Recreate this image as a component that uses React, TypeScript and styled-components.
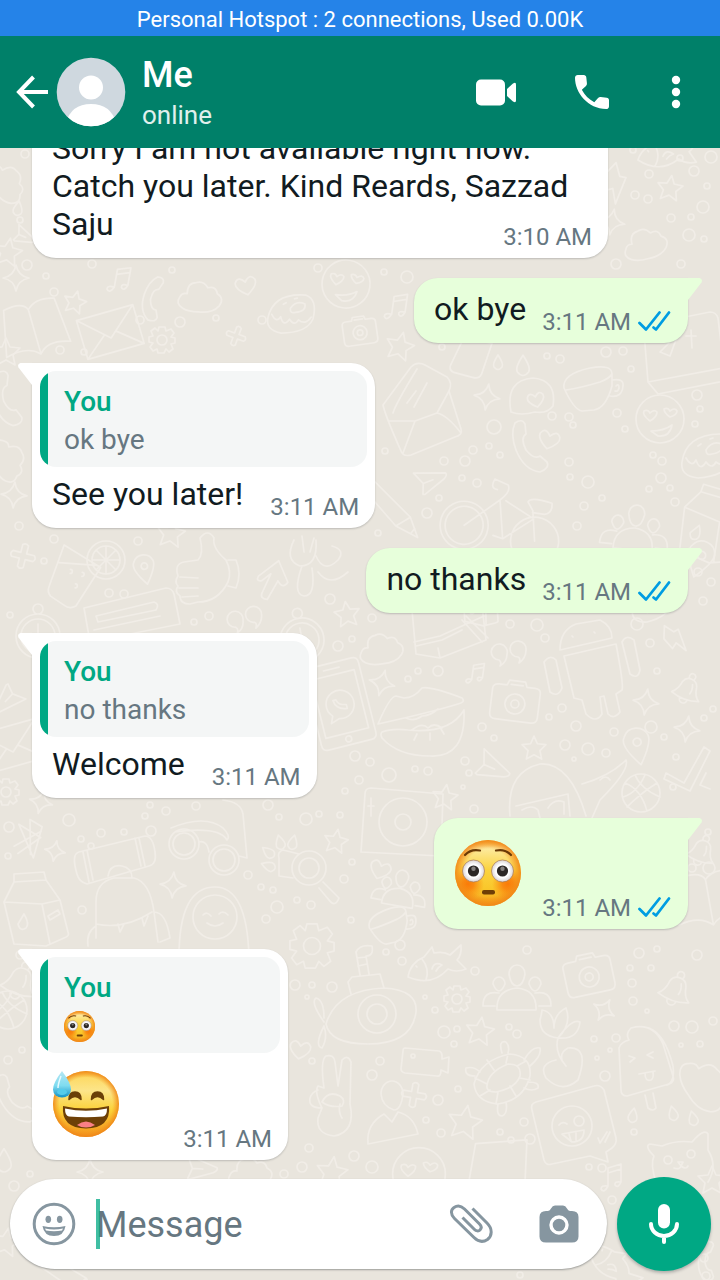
import React, { useId } from 'react';
import styled, { createGlobalStyle } from 'styled-components';

const GlobalStyle = createGlobalStyle`
  * { box-sizing: border-box; }
  body { margin: 0; font-family: Roboto, "Noto Sans", sans-serif; color: #111b21; }
`;

/* ---------- Layout ---------- */

const Page = styled.div`
  position: relative;
  display: flex;
  flex-direction: column;
  height: 100vh;
  overflow: hidden;
  background: #e9e5dd;
`;

const StatusBar = styled.div`
  flex: none;
  background: #2583e8;
  color: #fff;
  font-size: 22px;
  line-height: 36px;
  padding-top: 2px;
  height: 36px;
  text-align: center;
`;

const Header = styled.header`
  flex: none;
  position: relative;
  z-index: 1;
  display: flex;
  align-items: center;
  height: 112px;
  padding: 0 18px 0 16px;
  background: #008069;
  color: #fff;
`;

const IconButton = styled.button<{ $width: number }>`
  flex: none;
  display: flex;
  align-items: center;
  justify-content: center;
  width: ${(p) => p.$width}px;
  height: 64px;
  padding: 0;
  border: 0;
  background: none;
  color: inherit;
`;

const Avatar = styled.svg`
  flex: none;
  width: 70px;
  height: 70px;
  margin-left: 8px;
`;

const Contact = styled.div`
  flex: 1;
  min-width: 0;
  padding: 2px 0 0 16px;
`;

const ContactName = styled.h1`
  margin: 0;
  font-size: 36px;
  font-weight: 500;
  line-height: 44px;
`;

const Presence = styled.div`
  color: #e0f0ed;
  font-size: 26px;
  line-height: 36px;
`;

const Actions = styled.div`
  display: flex;
  gap: 20px;
`;

const Chat = styled.main`
  flex: 1;
  min-height: 0;
  position: relative;
  display: flex;
  flex-direction: column;
  justify-content: flex-end;
  gap: 20px;
  padding: 0 32px 4px;
  overflow: hidden;
`;

const Wallpaper = styled.svg`
  position: absolute;
  left: 0;
  top: 148px;
  width: 100%;
  height: calc(100% - 148px);
  fill: none;
  stroke: #f1ede7;
  stroke-width: 1.7;
  stroke-linecap: round;
  stroke-linejoin: round;
`;

/* ---------- Messages ---------- */

const Bubble = styled.article<{ $out?: boolean; $quoted?: boolean }>`
  position: relative;
  flex: none;
  align-self: ${(p) => (p.$out ? 'flex-end' : 'flex-start')};
  max-width: 576px;
  min-width: ${(p) => (p.$quoted ? '256px' : '0')};
  border-radius: ${(p) => (p.$out ? '24px 0 24px 24px' : '0 24px 24px 24px')};
  background: ${(p) => (p.$out ? '#e7ffdb' : '#fff')};
  box-shadow: 0 1px 2px rgba(11, 20, 26, 0.2);
`;

const Tail = styled.svg<{ $out?: boolean }>`
  position: absolute;
  top: 0;
  ${(p) => (p.$out ? 'right: -15px' : 'left: -15px; transform: scaleX(-1)')};
  width: 16px;
  height: 24px;
  fill: ${(p) => (p.$out ? '#e7ffdb' : '#fff')};
`;

const QuoteSpacer = styled.div`
  padding: 8px 8px 0;
`;

const Quote = styled.blockquote`
  margin: 0;
  padding: 12px 16px 8px 24px;
  border-radius: 16px;
  background: linear-gradient(90deg, #00a884 8px, #f4f6f6 8px);
  font-size: 28px;
  line-height: 38px;
  color: #667781;
`;

const QuoteAuthor = styled.div`
  color: #00a884;
  font-weight: 500;
`;

const QuoteText = styled.div`
  display: flex;
  align-items: center;
  height: 38px;
`;

const Body = styled.div<{ $out?: boolean; $quoted?: boolean; $long?: boolean }>`
  display: ${(p) => (p.$long ? 'flow-root' : 'flex')};
  justify-content: space-between;
  align-items: flex-end;
  gap: ${(p) => (p.$out ? '16px' : '27px')};
  padding: ${(p) => (p.$quoted ? '8px' : '12px')} 16px 7px 20px;
`;

const Text = styled.span`
  margin-bottom: 8px;
  font-size: 32px;
  line-height: 38px;
`;

const BigEmoji = styled.span`
  display: flex;
  margin: 10px 5px 16px 1px;
`;

const Meta = styled.span<{ $long?: boolean }>`
  display: flex;
  align-items: center;
  gap: 7px;
  height: 28px;
  ${(p) => (p.$long ? 'float: right; margin-top: 18px;' : '')}
  color: #667781;
  font-size: 24px;
  line-height: 28px;
  white-space: nowrap;
`;

/* ---------- Composer ---------- */

const Composer = styled.form`
  flex: none;
  position: relative;
  display: flex;
  align-items: center;
  gap: 10px;
  padding: 13px 9px 9px 10px;
`;

const Field = styled.div`
  flex: 1;
  min-width: 0;
  display: flex;
  align-items: center;
  height: 90px;
  padding: 0 4px 0 12px;
  border-radius: 45px;
  background: #fff;
  color: #8696a0;
  box-shadow: 0 1px 2px rgba(11, 20, 26, 0.35);
`;

const InputBox = styled.label`
  position: relative;
  flex: 1;
  min-width: 0;
  margin-left: 10px;
`;

const Input = styled.input`
  display: block;
  width: 100%;
  height: 50px;
  padding: 2px 0 0;
  border: 0;
  outline: 0;
  background: none;
  color: #111b21;
  font-family: inherit;
  font-size: 36px;
  &::placeholder { color: #667781; opacity: 1; }
`;

const Caret = styled.span`
  position: absolute;
  left: 0;
  top: 0;
  width: 4px;
  height: 50px;
  background: rgba(0, 168, 132, 0.75);
`;

const MicButton = styled.button`
  flex: none;
  display: flex;
  align-items: center;
  justify-content: center;
  width: 94px;
  height: 94px;
  padding: 0;
  border: 0;
  border-radius: 50%;
  background: #00a884;
  box-shadow: 0 2px 3px rgba(11, 20, 26, 0.25);
`;

/* ---------- Emoji ---------- */

function FlushedEmoji({ size }: { size: number }) {
  const id = useId();
  return (
    <svg width={size} height={size} viewBox="0 0 66 66" role="img" aria-label="Flushed face">
      <defs>
        <linearGradient id={id + 'f'} x1="0" y1="0" x2="0" y2="1">
          <stop offset="0" stopColor="#f9b233" />
          <stop offset="0.12" stopColor="#fdeaa0" />
          <stop offset="0.45" stopColor="#fbd33f" />
          <stop offset="0.75" stopColor="#f9c62a" />
          <stop offset="1" stopColor="#f59a1d" />
        </linearGradient>
        <radialGradient id={id + 'r'}>
          <stop offset="0.72" stopColor="#f58a10" stopOpacity="0" />
          <stop offset="1" stopColor="#f08418" stopOpacity="0.9" />
        </radialGradient>
        <radialGradient id={id + 'b'}>
          <stop offset="0" stopColor="#fa7a08" />
          <stop offset="0.35" stopColor="#fa7f0c" stopOpacity="0.85" />
          <stop offset="1" stopColor="#fa8a10" stopOpacity="0" />
        </radialGradient>
        <radialGradient id={id + 'e'}>
          <stop offset="0.6" stopColor="#fff" />
          <stop offset="1" stopColor="#d9d4d6" />
        </radialGradient>
        <clipPath id={id + 'c'}><circle cx="33" cy="33" r="33" /></clipPath>
      </defs>
      <circle cx="33" cy="33" r="33" fill={`url(#${id}f)`} />
      <g clipPath={`url(#${id}c)`}>
        <circle cx="13" cy="44" r="16" fill={`url(#${id}b)`} />
        <circle cx="53" cy="44" r="16" fill={`url(#${id}b)`} />
      </g>
      <circle cx="33" cy="33" r="33" fill={`url(#${id}r)`} />
      {[18.5, 47.5].map((x) => (
        <g key={x}>
          <circle cx={x} cy="31" r="11" fill={`url(#${id}e)`} stroke="#a8754e" strokeWidth="0.7" />
          <circle cx={x} cy="31" r="5.6" fill="#2b2725" />
          <circle cx={x} cy="28.8" r="2.2" fill="#85817f" />
        </g>
      ))}
      <path d="M10 15 Q16 8.5 25 10.5" fill="none" stroke="#6b3a06" strokeWidth="2.2" strokeLinecap="round" />
      <path d="M56 15 Q50 8.5 41 10.5" fill="none" stroke="#6b3a06" strokeWidth="2.2" strokeLinecap="round" />
      <rect x="27" y="50" width="13" height="4.4" rx="2" fill="#6f3e06" />
    </svg>
  );
}

function SweatEmoji({ size }: { size: number }) {
  const id = useId();
  return (
    <svg width={size} height={size} viewBox="0 0 66 66" role="img" aria-label="Grinning face with sweat">
      <defs>
        <linearGradient id={id + 'f'} x1="0" y1="0" x2="0" y2="1">
          <stop offset="0" stopColor="#f9b634" />
          <stop offset="0.1" stopColor="#fdda66" />
          <stop offset="0.3" stopColor="#fce58a" />
          <stop offset="0.6" stopColor="#fbd137" />
          <stop offset="1" stopColor="#f4921c" />
        </linearGradient>
        <radialGradient id={id + 'r'}>
          <stop offset="0.8" stopColor="#f59a20" stopOpacity="0" />
          <stop offset="1" stopColor="#ee8418" stopOpacity="0.9" />
        </radialGradient>
        <linearGradient id={id + 'd'} x1="0" y1="0" x2="0" y2="1">
          <stop offset="0" stopColor="#b5e6f3" />
          <stop offset="0.55" stopColor="#7fdcf0" />
          <stop offset="1" stopColor="#1593c8" />
        </linearGradient>
      </defs>
      <circle cx="33" cy="33" r="33" fill={`url(#${id}f)`} />
      <circle cx="33" cy="33" r="33" fill={`url(#${id}r)`} />
      <path d="M16 28.5 Q16 21 22 21 Q28 21 28 28.5 Q22 22.5 16 28.5Z" fill="#6b4008" stroke="#6b4008" strokeWidth="1.5" strokeLinejoin="round" />
      <path d="M38.5 28.5 Q38.5 21 44.5 21 Q50.5 21 50.5 28.5 Q44.5 22.5 38.5 28.5Z" fill="#6b4008" stroke="#6b4008" strokeWidth="1.5" strokeLinejoin="round" />
      <path d="M10 35 Q33 40 56 35 Q58 57 33 57.5 Q8 57 10 35Z" fill="#6e4007" />
      <path d="M24 54 Q33 47 42 54 Q38 56.5 33 56.5 Q28 56.5 24 54Z" fill="#fb7f86" />
      <path d="M12 37.5 Q33 42 54 37.5 Q54 45 50 45.500 Q33 47 16 45.5 Q12 45 12 37.5Z" fill="#fff" />
      <path d="M9 0 Q18 12 18 18.5 A9 8 0 0 1 0 18.5 Q0 12 9 0Z" fill={`url(#${id}d)`} />
      <path d="M8 5 Q5 13 5 17" stroke="#e6fafe" strokeWidth="1.5" fill="none" />
      <ellipse cx="9" cy="21" rx="5" ry="3" fill="#55ccec" />
    </svg>
  );
}

/* ---------- Wallpaper drawings ---------- */

const star = 'M0-14L4-5L14-4L7 3L9 13L0 8L-9 13L-7 3L-14-4L-4-5Z';
const sparkle = 'M0-13Q2-2 13 0Q2 2 0 13Q-2 2-13 0Q-2-2 0-13Z';
const heart = 'M0 9Q-12 1-10-5Q-6-12 0-4Q6-12 10-5Q12 1 0 9Z';
const cloud = 'M-16 14Q-24 10-20 3Q-18-2-13-1Q-14-12-5-13Q2-16 7-9Q15-12 17-4Q25 0 20 8Q14 16 0 16Q-10 17-16 14Z';
const drop = 'M0-7Q6 2 4 5Q0 10-4 5Q-6 2 0-7Z';
const plus = 'M-3-11Q0-14 3-11L3-3L11-3Q14 0 11 3L3 3L3 11Q0 14-3 11L-3 3L-11 3Q-14 0-11-3L-3-3Z';
const plane = 'M-16-8L16-6Q18-4 14 0L-6 14L-8 14L-7 3L3 0M-7 3L-16-8';
const music = 'M-4 10L-4-8L9-12L9 6M-4-3L9-7M-4 10Q-11 9-11 13Q-8 18-4 10M9 6Q2 5 3 9Q6 13 9 6';
const quotes = 'M-4 0A8 8 0 1 0-12 6Q-9 8-11 12Q-4 8-4 0ZM15-4A8 8 0 1 0 7 3Q10 4 8 9Q15 4 15-4Z';
const bell = 'M-15 11Q-8 5-7-6A10 10 0 0 1 12-6Q14 6 21 10Q4 17-15 11ZM-3 14A5 5 0 0 0 7 14M-1-14A4 4 0 1 1 6-14M6-7Q9 0 7 5';
const camera = 'M-24-12Q-24-17-18-17L-10-17L-8-22L8-22L10-17L18-17Q24-17 24-12L24 12Q24 18 18 18L-18 18Q-24 18-24 12ZM10 1A10 10 0 1 0-10 1A10 10 0 1 0 10 1M4 1A4 4 0 1 0-4 1A4 4 0 1 0 4 1M-6-18L6-18';
const people = 'M-20 20Q-21 0 0-2Q20 0 19 20ZM-8-16A8 9 0 1 1 8-16Q6-4 0-4Q-6-4-8-16ZM-24-6A6 7 0 1 1-12-6Q-18 8-24-6ZM12-6A6 7 0 1 1 24-6Q18 8 12-6ZM-22 16L-34 16Q-34 0-18 3M22 16L34 16Q34 0 18 3';
const gear = 'M-3-13L3-13L4-9L9-11L12-7L9-3L13-2L13 3L9 4L11 9L7 12L4 9L2 13L-4 13L-5 9L-9 11L-12 7L-9 3L-13 2L-13-3L-9-4L-11-9L-7-12L-4-9ZM5 0A5 5 0 1 0-5 0A5 5 0 1 0 5 0';
const phone = 'M-22-42L22-42Q28-42 28-36L28 36Q28 42 22 42L-22 42Q-28 42-28 36L-28-36Q-28-42-22-42ZM-22-30L22-30L22 30L-22 30ZM-8-36L8-36M3 36A3 3 0 1 0-3 36A3 3 0 1 0 3 36M14 0A14 14 0 1 0-10 10L-13 17L-4 14A14 14 0 0 0 14 0M-6-5Q-5 5 6 6L6 2L2 1Q-2 0-3-5Z';
const lips = 'M-44 18Q-32-10-26-10L-18-8Q-8-8 0-18Q8-20 40-8Q44-4 36-2Q10 6-44 18ZM-40 26Q-30 22-14 24Q28 28 42 4Q44 52 8 50Q-24 50-40 32Q-42 28-40 26ZM-16 12Q-8 16 0 10Q8 10 16 3M-10 24Q0 16 6 22Q12 16 20 22M-8 34L-5 28M8 34L8 27M22 28L19 23';
const lemon = 'M19 0A19 19 0 1 0-19 0A19 19 0 1 0 19 0M14 0A14 14 0 1 0-14 0A14 14 0 1 0 14 0M-13 0L13 0M0-13L0 13M-9-9L9 9M-9 9L9-9';
const drink = 'M-16-30L22-10L0 30Q-6 34-12 30L-26 22Q-30 18-28 12ZM-20-12L18-12M-8-2A2 2 0 1 0-8-6M4 0A2 2 0 1 0 4-4M-2 12A2 2 0 1 0-2 8';
const thumb = 'M-30 8Q-34-4-24-6L-10-8Q-4-14-8-30Q0-40 6-30Q4-20 18-8Q24 4 20 14Q10 34-10 34L-18 36Q-28 36-28 28Q-34 24-30 18Q-34 14-30 8ZM-28 9L-10 10M-29 20L-10 20M-26 29L-10 28M20-8L28-8Q34 6 28 20L20 18';
const cup = 'M-26 0Q-28-14 0-20Q22-24 22-14L22-2Q16 20 4 22L-8 23Q-16 22-26 0ZM-24 2Q-10 0 10-6Q20-10 22-14M22-8Q34-10 33-2Q32 10 20 8M26-2Q29-5 29 0Q28 4 25 3';
const envelope = 'M-42 0L-14-38Q-8-44 0-40L22-28Q28-22 24-14L36 24Q38 30 30 32L-14 50Q-22 52-24 46Q-40 10-42 0ZM-32 8Q-30 0-8-36M-36 16L-10 16L-22 48M-10 16L12 8Q22 10 36 28M12 8L24-14M-18-2L-9-14M-11 2L2-22';
const laughing = 'M24 0A24 24 0 1 0-24 0A24 24 0 1 0 24 0M-10 2Q-18-4-16-8Q-12-10-10-6Q-6-10-3-7Q-3-2-10 2ZM10-2Q4-6 4-10Q8-12 10-8Q15-12 17-8Q17-4 10-2ZM-9 12Q4 12 12 6Q10 18-2 17Z';
const handset = 'M-15-25Q-8-30-5-24L-4-14Q-10-10-4 2Q4 12 10 8L17 14Q20 20 10 24Q-6 22-14 2Q-20-14-15-25Z';
const bike = 'M-8 30A24 24 0 1 0-56 30A24 24 0 1 0-8 30M-13 30A19 19 0 1 0-51 30A19 19 0 1 0-13 30M64 36A24 24 0 1 0 16 36A24 24 0 1 0 64 36M-32 30L0 0Q10-10 6-16L-8-20Q-12-10-4-10M0 0L8 38L36 14L6 0M40 36L34 6L28-2Q30-8 52-4Q54 6 46 8L34 8M8 38L-2 36';
const donut = 'M-24 8Q-20-20 16-20Q30-16 26 6Q20 22-8 24Q-26 22-24 8ZM-20 4Q-14 14-10 6Q-6 18 0 8Q6 16 10 8Q18 14 24 4M0-4Q6-14 16-10Q18-2 6 0Q0 2 0-4M-8-8L-5-10M4-15L7-16';
const bun = 'M-20 14Q-26-18 2-20Q26-18 22 8Q16 16 4 14Q-10 18-20 14Z';
const submarine = 'M-44 12Q-34-22 14-24Q48-22 46 0Q42 32-2 32Q-40 32-44 12ZM26 2A19 19 0 1 0-12 2A19 19 0 1 0 26 2M17 2A10 10 0 1 0-3 2A10 10 0 1 0 17 2M-19-18L-22-30L-18-35L10-38L14-24M-10-37L-14-60Q-10-68 2-66Q4-56-4-56L-1-38M-13-54L-4-55M-12-46L-3-48M-46 10Q-60-10-54-14Q-46-12-46 6M-46 14Q-56 34-48 36Q-42 26-46 14';
const fish = 'M-22 14Q-20 0-6-6L2-16L4-10Q14-12 20-8L31-18Q32-8 27-3L36 6Q26 10 18 6Q2 24-22 14ZM-8-4Q0 6-4 17M-14 3L-13 4M2 6Q4-2 12 2Q8 4 6 8';
const videoCam = 'M-20-13L14-10Q17-9 17-5L17-2L24-4L23 12L16 9Q16 16 12 15L-20 12Q-24 11-24 8L-22-10Q-22-13-20-13ZM-10-5A2 2 0 1 0-14-5A2 2 0 1 0-10-5';
const turtle = 'M-30 8Q-24-16 6-22Q28-20 26 0Q20 24-6 28Q-28 26-30 8ZM-17 10Q-16-4 4-12Q18-12 16 0Q12 12-8 16Q-18 16-17 10ZM-17 8L-29 2M-10-6L-17-16M2-13L4-22M13-10L22-15M16 2L26 4M6 10L12 20M-6 16L-8 28M-14 14L-24 20M-2-23Q-6-36 2-34Q6-30 4-23M20-16Q28-30 36-28Q38-20 26-10M-29 0Q-40 0-38-8Q-30-10-24-4M24 6Q36 6 34 12Q28 16 20 12M-6 28Q-8 40-2 40Q4 38 2 26';
const iceCream = 'M-26-14Q-24-20-16-22Q-20-28-14-34Q8-40 18-18L28 14Q30 20 24 22L-18 34Q-24 34-24 28ZM4-34Q20-28 28 4Q30 20 22 23M-16-6L-10-4L-15 0M8-10L2-7L8-4M-6 12L10 9M0 11Q0 20 6 18Q9 16 8 10M0 33L3 46Q8 50 11 46L8 31';
const peace = 'M-16 10Q-24-6-20-12L-14-10Q-18-38-12-42Q-4-44-3-36L0-12L4-38Q10-44 13-36L12 6Q18 34-4 38Q-22 36-20 20ZM-16 10Q-30 10-28 0Q-26-6-20-8M-16 4Q-10-8 2-2Q8 2 4 8Q-8 10-16 4ZM2 6Q0 14 4 20';
const person = 'M-11-22A11 13 0 1 1 11-22Q9-6 2-6Q-10-10-11-22ZM-24 28Q-26 8-8-2L0 6L6-4Q22 0 26 18Z';
const winkBox = 'M-40-16Q-42-22-36-24L22-40Q28-42 32-36L44 12Q45 18 40 22L34 26L36 36L18 30L-20 38Q-26 40-28 34ZM20 0A20 20 0 1 0-20 0A20 20 0 1 0 20 0M-13-1Q-10-5-5-2M12-5A5 5 0 1 0 2-5A5 5 0 1 0 12-5M-10 8L12 4Q12 16 0 16ZM-3 8L-1 15M4 7L4 14M26 12L28 17L35 6M33 16L38 6';
const cat = 'M-24 24Q-30 6-26-2Q-36-12-30-14L-18-12Q-4-18 12-16Q24-30 28-24L28-8Q38 8 28 24M-8 2A4 4 0 1 0-16 2A4 4 0 1 0-8 2M15-4A4 4 0 1 0 7-4A4 4 0 1 0 15-4M-2 4L3 4L1 8ZM-6 10Q0 12 1 8Q6 12 8 8';
const plant = 'M0 0Q-18-2-18-18Q-16-26-16-28Q-4-26-4-10Q-4-24 8-30Q14-14 0 0Q14-20 22-16Q20 2 0 0ZM0 0Q-4 14 8 28M-2 22Q-20 26-12 40Q4 56 20 42Q32 8 10 10Q2 14 4 22';
const android = 'M-36-14L16-26Q24 16 22 20L16 24L20 42Q14 50 8 44L4 26L0 27L2 44Q-4 54-14 44L-18 30L-26 28ZM-40-20Q-40-40-24-46L0-50Q12-44 12-32ZM-56-8Q-50-16-44-10L-38 18Q-42 28-50 22ZM22-28Q26-36 34-30L40 0Q38 10 30 4ZM-28-34L-27-33M-6-38L-5-37';
const helmet = 'M-40 40Q-44-4-10-12Q20-14 36 40M-34 30L18 18L20 40M-28 34Q-18 28-12 34L-10 42M-2 32Q4 22 14 26L14 38M32 8Q60 0 76-16Q80-6 50 24L42 42M50 4Q56-2 60 4';
const beaker = 'M-14-14L14-20L17 12Q17 18 10 19L-9 22Q-15 22-15 16Z';
const pin = 'M0 18Q-18-4-12-12A13 13 0 0 1 12-10Q14-2 0 18ZM4-5A4 4 0 1 0-4-5A4 4 0 1 0 4-5';
const ball = 'M19 0A19 19 0 1 0-19 0A19 19 0 1 0 19 0M-16-10Q0-4 6 18M-6-18Q0-4 19 4M16-10Q0 0-14 14M4-18Q-4 0-18 4';
const bolt = 'M-8-20L2-10L8-12L12 16L2 4L-4 10L-12-4Z';
const ticks = 'M-24 10L-6 20L14-16L20-12L0 28L-26 16ZM10 22L16 10M10 22L20 26';
const turntable = 'M-38-22Q-38-28-32-28L40-22L38 40L-42 36ZM24 6A24 24 0 1 0-24 6A24 24 0 1 0 24 6M8 6A8 8 0 1 0-8 6A8 8 0 1 0 8 6M-32-18L-32 0M-35-10L-29-10';
const glasses = 'M-16 0A15 15 0 1 0-46 0A15 15 0 1 0-16 0M-20 0A11 11 0 1 0-42 0A11 11 0 1 0-20 0M24 16A15 15 0 1 0-6 16A15 15 0 1 0 24 16M20 16A11 11 0 1 0-2 16A11 11 0 1 0 20 16M-16-2Q-8-4-6 8M-44-16Q-10-30 8-16Q16-8 12-4Q4-18-40-12M24 12L32 14L28-30Q26-42 8-44';
const magnifier = 'M17 0A17 17 0 1 0-17 0A17 17 0 1 0 17 0M10 0A10 10 0 1 0-10 0A10 10 0 1 0 10 0M14 14L30 30Q26 40 20 32L10 20M-30-10Q-32-16-26-18L-10-14M-30-10L-30 8L-16 10';
const carton = 'M-32-2L-22-22L-22-30L8-32L10-24L24-4L32 28Q34 32 28 34L10 42L-22 40ZM-32-2L6 0L24-4M6 0L14 40M-22-22L10-24M-12 10Q-6 20-10 24Q-16 28-18 20ZM12 12L22 6L24 10L14 16Z';
const backpack = 'M-28 36L-28 0Q-28-20-10-24L10-24Q26-20 30 10L34 40M-16-26Q-14-38-2-36Q8-34 8-24M-28 22Q0 28 28 10M-6 22L-4 30L0 22M18 16L20 24L24 14M-28 24Q-38 30-36 44M30 10Q42 10 46 36L36 40';
const capsule = 'M-36 6Q-42-14-34-16L32-32Q40-32 42-16Q44-4 36-2L-26 16Q-34 14-36 6ZM-30-16L-24 14M-26-18L-20 12M22-30L28-2M26-30L32-2';
const face = 'M22 0A22 22 0 1 0-22 0A22 22 0 1 0 22 0M-36 40Q-36-30 0-30Q32-30 34 40M-12-2Q-8-6-4-1M4-3Q8-7 13-2M-8 6Q0 12 8 6';
const keyboard = 'M-46-10L36-30Q42-30 44-24L50 6L-40 24ZM-34-2L24-16Q30-14 26-8L-32 4ZM-36 12L30-2';
const bluetooth = 'M-2 22L-8-14L10 4L-16 14M-2 22L14-6L4-16L-4 18M-18 6L12-2';
const clock = 'M22 0A22 22 0 1 0-22 0A22 22 0 1 0 22 0M17 0A17 17 0 1 0-17 0A17 17 0 1 0 17 0M0 0L0-12M0 0L8 6M5-27A5 5 0 1 0-5-27A5 5 0 1 0 5-27';
const arrow = 'M-14-2L4-20L16 0Q12 8 6 0L-2 20Q-10 20-8 14L-2-6L-10 2Q-16 4-14-2Z';
const rabbit = 'M-30-20Q-40 0-24 6Q-6 6-8-20M-20-8L-22-24M-14-8L-10-22M-22 6Q-32 34-20 36Q-8 36-12 8M-8-4Q0 14 14 0Q22-10 8-14M-6 12Q6 28 24 12';
const letter = 'M-32-14L26-22L32 18L-26 26ZM-32-14L0 8L26-22M-26 26L-6 4M32 18L6 2';
const laptop = 'M-32 30L-36-20Q-36-26-30-28L30-40Q36-40 38-34L44 16M-32 30L44 16L50 28L-22 42ZM-20 0L-2-18L-10 4ZM6-16L16-16M11-22L12-4';
const book = 'M-30 20L-20-26Q0-30 4-20Q14-30 32-24L36 22Q14 14 4 26Q-8 14-30 20ZM4-20L4 26';
const gift = 'M-44-40L-40 4L-16 8L30-10L26-44M-42-8L-16-14L28-34M-40-4L-14-10L6-20M6-30L26-8M10-34L32-12M-16 8L-18-2';
const pencil = 'M-36-16L-28-26L22 4L34 22L10 16ZM10 16L22 4M26 20L29 14';

type Doodle = [path: string, x: number, y: number, rotate?: number, scale?: number];

const doodles: Doodle[] = [
  [cloud, 8, 182, 60], [drop, 18, 208, 10], [star, 8, 252, 10], [plane, 24, 236, 40, 0.7],
  [star, 670, 188, 8, 0.9], [sparkle, 612, 222, 10], [cloud, 645, 243, -10], [bolt, 613, 184, 30], [fish, 662, 150, 10],
  [book, 30, 330, -16], [sparkle, 16, 278], [star, 75, 302, 14, 0.8], [music, 120, 278, 10], [handset, 154, 300, 40, 0.8],
  [cloud, 200, 296, 6], [heart, 246, 286, -12], [donut, 290, 312, 4, 0.9], [laughing, 346, 284, 8], [letter, 110, 330, -8],
  [gear, 162, 340], [plus, 236, 336, 20, 0.8], [camera, 360, 332, -8, 0.7], [music, 397, 305, 8],
  [star, 400, 346, 14], [beaker, 471, 356, 24], [envelope, 425, 405], [sparkle, 487, 397, 8],
  [drop, 498, 362], [drop, 523, 365, 0, 1.4], [bun, 531, 398], [heart, 536, 400, -12, 0.8], [cup, 590, 388],
  [laptop, 680, 352], [laughing, 660, 419], [handset, 530, 448], [heart, 549, 440, 14], [donut, 706, 454],
  [plane, 430, 480, -4], [pencil, 390, 508, 14], [bike, 500, 500, 8], [people, 635, 530, 6], [carton, 714, 520, 20],
  [handset, 8, 400, 12], [cloud, 10, 460, 80], [sparkle, 14, 495, 4], [star, 6, 352],
  [plus, 23, 556, 14], [drink, 78, 576, 4], [lemon, 106, 560], [pin, 145, 570, -10, 0.8], [thumb, 208, 568],
  [star, 171, 533, 8], [arrow, 272, 580, 8], [rabbit, 324, 560], [keyboard, 130, 618], [clock, 38, 636],
  [quotes, 247, 620, -6], [clock, 302, 640, -10], [star, 347, 614, -8, 0.9], [plane, 8, 700, 150], [letter, 12, 744, -8],
  [carton, 482, 600, 10, 0.6], [sparkle, 606, 575], [pin, 700, 560, 20], [donut, 650, 602, -10, 0.8],
  [cloud, 381, 648, -4], [sparkle, 382, 683, 14], [phone, 340, 704, -14], [lips, 422, 706], [music, 476, 672, 8, 0.8],
  [quotes, 511, 654], [camera, 515, 703, 7], [android, 600, 670], [bell, 686, 688, 22, 0.8], [bolt, 674, 640, -12, 0.8],
  [sparkle, 646, 702, 8], [sparkle, 687, 729, 8], [star, 534, 748, 0, 0.85], [plane, 492, 767, 40, 1.1],
  [helmet, 550, 776], [pin, 638, 747, -10], [ball, 641, 793], [ticks, 690, 763], [star, 445, 797, 8, 0.9], [turntable, 403, 816],
  [gift, 456, 650],
  [gear, 6, 792], [sparkle, 41, 802, 14, 0.9], [bluetooth, 30, 836, -14], [sparkle, 55, 851, 10, 0.8], [capsule, 113, 868],
  [glasses, 215, 844], [magnifier, 309, 868], [drop, 280, 842, -14], [drop, 293, 842, 14], [drop, 268, 852, -50], [drop, 268, 866, -70],
  [star, 336, 841, 10, 0.85], [carton, 36, 904], [backpack, 124, 902], [sparkle, 173, 885, 4], [face, 215, 917],
  [people, 400, 890, 10, 0.8], [cup, 390, 925, -8, 0.8],
  [gear, 312, 946, 0, 1.7], [heart, 380, 870, 20], [bell, 18, 980, 20], [ball, 8, 1010], [handset, 16, 1100, -10],
  [bell, 700, 850, 20, 0.8], [book, 705, 900, -10], [submarine, 370, 1012], [fish, 430, 963], [gear, 457, 999], [people, 517, 990],
  [camera, 589, 976, -12], [bell, 674, 988, 20, 0.9], [sparkle, 604, 1010, 30, 0.9], [star, 480, 1031, 8],
  [plant, 558, 1038], [iceCream, 645, 1062], [turtle, 504, 1076], [videoCam, 425, 1061], [peace, 338, 1098],
  [person, 392, 1116], [plus, 414, 1095, 10], [star, 465, 1122, 10, 1.2], [winkBox, 572, 1126],
  [laughing, 419, 1174, 0, 1.1], [cat, 680, 1158], [drop, 633, 1115, 10], [drop, 673, 1113, -14], [drop, 693, 1118, -14],
  [star, 332, 1172, 8, 1.1], [cloud, 706, 1084, 60, 1.3], [beaker, 497, 1172, 8, 1.8], [star, 6, 1242, 10], [heart, 300, 1050, 10],
  [plane, 200, 1168, 20], [sparkle, 90, 1172], [cloud, 250, 1172], [pencil, 64, 1274], [music, 612, 1176], [fish, 612, 1260, 60],
  [drop, 4, 1160, 0, 1.6], [star, 712, 1180], [handset, 708, 1262, 30, 0.7],
];

const dots: [number, number, number][] = [
  [25, 154, 4], [20, 220, 3], [27, 265, 5], [633, 150, 3], [649, 174, 4], [694, 171, 5], [707, 186, 3], [711, 157, 6], [680, 158, 3], [635, 195, 4], [648, 199, 4],
  [703, 207, 6], [671, 218, 4], [691, 217, 3], [689, 235, 6], [704, 239, 3], [616, 264, 5], [681, 264, 4], [46, 276, 3], [54, 292, 4], [92, 264, 4],
  [172, 270, 3], [140, 320, 4], [180, 322, 5], [216, 318, 3], [262, 320, 4], [318, 268, 4], [384, 272, 3], [407, 277, 6], [60, 350, 4], [84, 352, 3],
  [442, 347, 3], [547, 356, 3], [560, 359, 4], [606, 352, 5], [623, 351, 4], [631, 369, 3], [697, 395, 5], [700, 409, 3], [695, 424, 3], [617, 413, 4], [569, 417, 4],
  [552, 416, 4], [573, 425, 3], [625, 429, 3], [494, 427, 7], [489, 446, 3], [473, 450, 4], [500, 455, 3], [444, 461, 4], [465, 461, 5], [385, 451, 3],
  [462, 478, 3], [477, 483, 4], [569, 462, 4], [570, 477, 3], [588, 482, 6], [653, 455, 3], [662, 461, 4], [661, 478, 5], [649, 489, 3], [670, 488, 3],
  [675, 502, 4], [602, 498, 3], [584, 506, 4], [577, 526, 4], [439, 498, 3], [427, 513, 5], [378, 533, 3], [698, 572, 4], [711, 582, 4], [703, 601, 4],
  [19, 526, 4], [54, 539, 4], [44, 561, 3], [138, 541, 4], [109, 593, 4], [124, 594, 4], [10, 615, 3], [194, 622, 3], [209, 616, 4], [330, 599, 5],
  [338, 646, 5], [352, 639, 3], [372, 618, 4], [537, 625, 6], [510, 624, 4], [637, 624, 6], [650, 643, 4], [545, 638, 4], [418, 671, 3], [438, 671, 5], [408, 679, 3], [562, 708, 4],
  [549, 717, 3], [482, 727, 4], [494, 738, 3], [576, 726, 5], [614, 732, 4], [651, 727, 6], [664, 737, 3], [565, 745, 5], [588, 749, 6], [606, 753, 4],
  [574, 759, 2], [355, 756, 5], [370, 762, 4], [465, 761, 4], [469, 773, 3], [389, 775, 7], [415, 769, 3], [428, 771, 4], [359, 780, 4], [345, 791, 3],
  [463, 787, 2], [474, 809, 4], [676, 757, 3], [673, 787, 3], [657, 671, 3], [713, 709, 3], [704, 718, 3], [150, 805, 3], [166, 811, 4], [196, 806, 4],
  [145, 816, 3], [69, 820, 6], [101, 833, 4], [124, 832, 3], [151, 831, 5], [81, 839, 3], [91, 846, 3], [9, 827, 5], [8, 856, 3], [268, 805, 5], [279, 817, 3],
  [306, 819, 6], [319, 814, 3], [340, 815, 3], [344, 879, 4], [352, 862, 3], [248, 875, 4], [261, 887, 3], [273, 890, 3], [277, 907, 6], [297, 900, 3],
  [311, 905, 4], [266, 919, 4], [82, 910, 4], [351, 920, 3], [20, 955, 4], [8, 1060, 4], [22, 1050, 3], [295, 985, 5], [400, 945, 5], [386, 952, 3], [402, 961, 4],
  [475, 971, 4], [527, 950, 4], [332, 987, 5], [312, 985, 3], [307, 997, 2], [425, 997, 2], [435, 1010, 3], [444, 1032, 6], [457, 1029, 3], [454, 1044, 3],
  [509, 1027, 3], [517, 1034, 4], [594, 1039, 3], [616, 1038, 4], [610, 1050, 2], [597, 1058, 2], [605, 1076, 5], [639, 953, 5], [657, 949, 3], [630, 968, 3],
  [651, 968, 3], [632, 983, 4], [633, 1001, 4], [647, 1011, 2], [697, 955, 5], [674, 1026, 5], [692, 1027, 6], [713, 1021, 4], [681, 1045, 2], [700, 1044, 3],
  [312, 1061, 3], [380, 1061, 4], [372, 1075, 5], [438, 1100, 5], [458, 1089, 3], [426, 1120, 3], [441, 1133, 4], [524, 1122, 4], [500, 1132, 3],
  [511, 1140, 3], [530, 1139, 5], [354, 1156, 5], [372, 1167, 6], [309, 1148, 4], [302, 1167, 5], [634, 1132, 3], [589, 1167, 3], [602, 1168, 4],
  [692, 868, 4], [708, 832, 3], [709, 868, 6], [284, 1174, 4], [14, 1186, 5], [30, 1174, 3], [704, 1258, 4], [612, 1200, 4], [520, 1275, 3], [706, 1276, 4],
];

function WallpaperArt() {
  return (
    <Wallpaper viewBox="0 148 720 1132" preserveAspectRatio="xMidYMin slice" aria-hidden="true">
      {doodles.map(([d, x, y, rotate = 0, scale = 1], i) => (
        <path key={i} d={d} transform={`translate(${x} ${y}) rotate(${rotate}) scale(${scale})`} vectorEffect="non-scaling-stroke" />
      ))}
      {dots.map(([x, y, r], i) => (
        <circle key={i} cx={x} cy={y} r={r} />
      ))}
    </Wallpaper>
  );
}

/* ---------- Message parts ---------- */

function ReadTicks() {
  return (
    <svg width="34" height="24" viewBox="0 0 34 24" fill="none" stroke="#009de2" strokeWidth="2.8" strokeLinecap="round" strokeLinejoin="round" role="img" aria-label="Read">
      <path d="M1.5 13 L8 19.5 L21.5 2.500" />
      <path d="M15.5 17.5 L18 19.5 L31 2.5" />
    </svg>
  );
}

function MessageTail({ out }: { out?: boolean }) {
  return (
    <Tail $out={out} viewBox="0 0 16 24" aria-hidden="true">
      <path d="M0 0H12.5Q16 1 14.5 4.5L1 22H0Z" />
    </Tail>
  );
}

interface MessageProps {
  out?: boolean;
  long?: boolean;
  time: string;
  quote?: React.ReactNode;
  children: React.ReactNode;
}

function Message({ out, long, time, quote, children }: MessageProps) {
  const quoted = Boolean(quote);
  return (
    <Bubble $out={out} $quoted={quoted}>
      <MessageTail out={out} />
      {quoted && (
        <QuoteSpacer>
          <Quote>
            <QuoteAuthor>You</QuoteAuthor>
            <QuoteText>{quote}</QuoteText>
          </Quote>
        </QuoteSpacer>
      )}
      <Body $out={out} $quoted={quoted} $long={long}>
        {children}
        <Meta $long={long}>
          <time>{time}</time>
          {out && <ReadTicks />}
        </Meta>
      </Body>
    </Bubble>
  );
}

export default function App() {
  return (
    <>
      <GlobalStyle />
      <Page>
        <WallpaperArt />
        <StatusBar>Personal Hotspot : 2 connections, Used 0.00K</StatusBar>
        <Header>
          <IconButton type="button" $width={32} aria-label="Back">
            <svg width="32" height="34" viewBox="0 0 32 34" fill="none" stroke="#fff" strokeWidth="4">
              <path d="M17.5 2 L3 17 L17.5 32 M2.5 17 H32" />
            </svg>
          </IconButton>
          <Avatar viewBox="0 0 70 70" role="img" aria-label="Profile picture">
            <clipPath id="avatar-clip"><circle cx="35" cy="35" r="34.3" /></clipPath>
            <circle cx="35" cy="35" r="34.3" fill="#cfd8df" />
            <g fill="#fff" clipPath="url(#avatar-clip)">
              <circle cx="35" cy="30.5" r="12" />
              <path d="M10 66 Q15 47 35 47 Q55 47 60 66 L60 72 H10Z" />
            </g>
          </Avatar>
          <Contact>
            <ContactName>Me</ContactName>
            <Presence>online</Presence>
          </Contact>
          <Actions>
            <IconButton type="button" $width={76} aria-label="Video call">
              <svg width="42" height="28" viewBox="0 0 42 28" fill="#fff">
                <rect x="1" y="1.5" width="29" height="26" rx="5" />
                <path d="M32 11 L38 5.5 Q41 3.5 41 6.5 V22.5 Q41 25.5 38 23.5 L32 18Z" />
              </svg>
            </IconButton>
            <IconButton type="button" $width={76} aria-label="Voice call">
              <svg width="34" height="34" viewBox="3 3 18 18" fill="#fff">
                <path d="M6.62 10.79c1.44 2.83 3.76 5.14 6.59 6.59l2-2.2c.4-.45.9-.55 1.4-.5l3.2.35c.7.1 1.19.6 1.19 1.3V19.500c0 .9-.6 1.500-1.500 1.500C9.900 21 3 12.500 3 4.500 3 3.600 3.600 3 4.500 3h3.170c.7 0 1.200.5 1.300 1.190l.35 3.200c.05.5-.1 1-.5 1.400z" />
              </svg>
            </IconButton>
            <IconButton type="button" $width={52} aria-label="More options">
              <svg width="10" height="34" viewBox="0 0 10 34" fill="#fff">
                <circle cx="5" cy="5" r="4.2" />
                <circle cx="5" cy="17" r="4.2" />
                <circle cx="5" cy="29" r="4.2" />
              </svg>
            </IconButton>
          </Actions>
        </Header>

        <Chat>
          <Message long time="3:10 AM">
            <Text>Sorry I am not available right now. Catch you later. Kind Reards, Sazzad Saju</Text>
          </Message>
          <Message out time="3:11 AM"><Text>ok bye</Text></Message>
          <Message time="3:11 AM" quote="ok bye"><Text>See you later!</Text></Message>
          <Message out time="3:11 AM"><Text>no thanks</Text></Message>
          <Message time="3:11 AM" quote="no thanks"><Text>Welcome</Text></Message>
          <Message out time="3:11 AM"><BigEmoji><FlushedEmoji size={66} /></BigEmoji></Message>
          <Message time="3:11 AM" quote={<FlushedEmoji size={31} />}><BigEmoji><SweatEmoji size={66} /></BigEmoji></Message>
        </Chat>

        <Composer onSubmit={(e) => e.preventDefault()}>
          <Field>
            <IconButton type="button" $width={64} aria-label="Emoji">
              <svg width="44" height="44" viewBox="0 0 44 44" fill="none" stroke="#8696a0" strokeWidth="3">
                <circle cx="22" cy="22" r="19.8" />
                <ellipse cx="16.3" cy="17.3" rx="2.8" ry="3.6" fill="#8696a0" stroke="none" />
                <ellipse cx="27.7" cy="17.3" rx="2.8" ry="3.6" fill="#8696a0" stroke="none" />
                <path d="M10.500 24 Q22 26.500 33.500 24 Q32 34 22 34 Q12 34 10.500 24Z" fill="#8696a0" stroke="none" />
                <path d="M13 26.500 Q22 28.500 31 26.500 L30 28.500 Q22 30 14 28.500Z" fill="#fff" stroke="none" />
              </svg>
            </IconButton>
            <InputBox>
              <Input type="text" placeholder="Message" aria-label="Message" />
              <Caret aria-hidden="true" />
            </InputBox>
            <IconButton type="button" $width={88} aria-label="Attach">
              <svg width="44" height="40" viewBox="0 0 44 40" fill="none" stroke="#8696a0" strokeWidth="3" strokeLinecap="butt">
                <path d="M23.5 4.5 L38 19 C44 25 43 32 38.5 35.5 C34 38.5 29 37.5 25 33.5 L5.5 14.5 C1 10 2 5.5 5 3.5 C8.5 1 12.5 2 15.5 5 L30.5 20 C33 22.5 32.5 24.5 31 26 C29.5 27.5 27 27 25.5 25.5 L13.5 13.5" />
              </svg>
            </IconButton>
            <IconButton type="button" $width={88} aria-label="Camera">
              <svg width="40" height="38" viewBox="0 0 40 38" fill="#8696a0">
                <path d="M7 6 H9 Q11 5.5 12 3.5 Q13.5 0.5 16 0.5 H24 Q26.5 0.5 28 3.5 Q29 5.5 31 6 H33 Q39.5 6 39.5 12 V31.5 Q39.5 37.5 33 37.5 H7 Q0.5 37.5 0.5 31.5 V12 Q0.5 6 7 6Z" />
                <circle cx="20" cy="20" r="8" stroke="#fff" strokeWidth="3.4" />
              </svg>
            </IconButton>
          </Field>
          <MicButton type="button" aria-label="Record voice message">
            <svg width="32" height="42" viewBox="0 0 32 42" fill="none" stroke="#fff" strokeWidth="4" strokeLinecap="round">
              <rect x="10" y="1" width="12" height="24.5" rx="6" fill="#fff" stroke="none" />
              <path d="M3 21 A13 12 0 0 0 29 21 M16 33 V39" />
            </svg>
          </MicButton>
        </Composer>
      </Page>
    </>
  );
}
